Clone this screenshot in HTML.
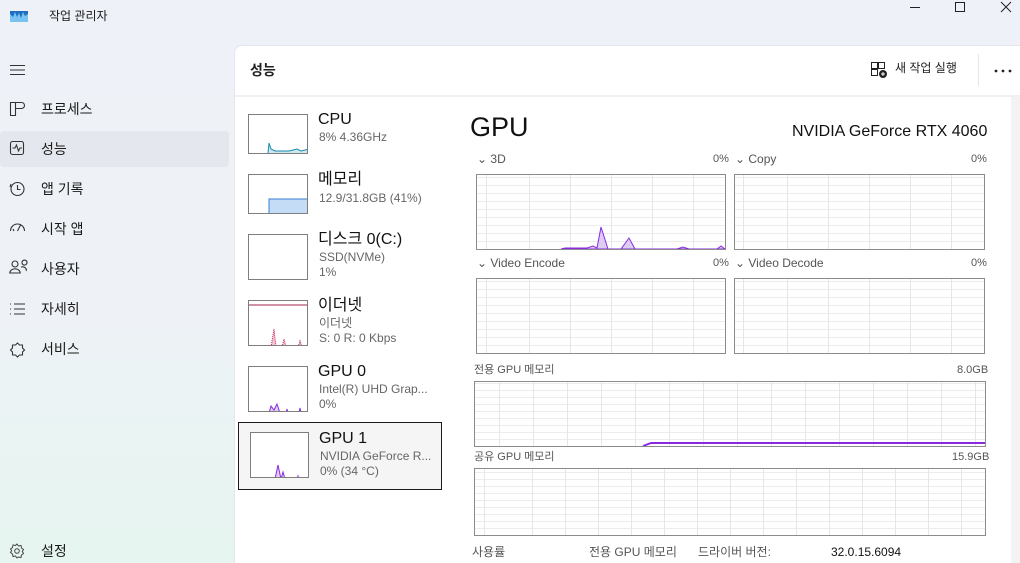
<!DOCTYPE html>
<html><head><meta charset="utf-8"><style>
*{margin:0;padding:0;box-sizing:border-box}
body{width:1020px;height:563px;overflow:hidden;position:relative;font-family:"Liberation Sans","Noto Sans CJK KR",sans-serif;background:linear-gradient(180deg,#eef1f7 0%,#eef2f6 55%,#e6f5f0 100%);color:#1a1a1a;line-height:1.15}
.a{position:absolute;white-space:nowrap}
.nav{font-size:14px;color:#1b1b1b}
.panel{position:absolute;left:234px;top:45px;width:786px;height:518px;background:#fff;border-top-left-radius:8px;border:1px solid #e3e6ea;border-right:none;border-bottom:none}
.g{position:absolute;border:1px solid #8b8b8b;background-color:#fff;
background-image:repeating-linear-gradient(90deg,transparent 0,transparent 40px,#e6e6e6 40px,#e6e6e6 41px),repeating-linear-gradient(0deg,transparent 0,transparent 7px,#ececec 7px,#ececec 8px);background-position:12px 0,0 0}
.lbl{font-size:12px;color:#555}
.th{position:absolute;border:1px solid #7e7e7e;background:#fff;overflow:hidden}
.t1{font-size:16px;color:#111;line-height:18px}
.t2{font-size:12px;color:#666;line-height:14px}
</style></head><body>
<svg class="a" style="left:10px;top:11px" width="18" height="11"><rect width="18" height="11" fill="#79c3f2"/><path d="M0 3 L3 6 L5 1 L7 6 L9 2 L11 7 L13 1 L15 5 L18 3 L18 0 L0 0Z" fill="#1f6fc0"/></svg>
<div class="a" style="left:49px;top:10px;font-size:12px">작업 관리자</div>
<svg class="a" style="left:905px;top:0" width="115" height="16" fill="none" stroke="#222" stroke-width="1"><path d="M5 7.5h10"/><rect x="50.5" y="2.5" width="9" height="9"/><path d="M96 2l10 10M106 2l-10 10"/></svg>
<svg class="a" style="left:10px;top:64px" width="15" height="12" stroke="#333" stroke-width="1"><path d="M0 1.5h15M0 6h15M0 10.5h15"/></svg>
<div class="a" style="left:0;top:131px;width:229px;height:36px;background:#e4e8ee;border-radius:4px"></div>
<svg class="a" style="left:9px;top:101px" width="20" height="270" fill="none" stroke="#333" stroke-width="1.1">
<path d="M1.5 1.5h11a3 3 0 0 1 0 6h-6v7h-5zM6.5 1.5v6"/>
<rect x="1.5" y="40.5" width="13" height="13" rx="2"/><path d="M3.5 47h2.5l1.5-3 2 6 1.5-3h2"/>
<circle cx="8.5" cy="88" r="6.5"/><path d="M8.5 84v4.5h3M2 83l-1 3"/>
<path d="M1.5 130a7 7 0 0 1 14 0M8.5 130l3-6M4 128l1 2"/>
<circle cx="6" cy="163" r="3"/><path d="M0.8 172a5 4 0 0 1 10.4 0zM13 161.5a2.5 2.5 0 1 1 0 .1M12 166a4 3 0 0 1 5 4"/>
<path d="M1 203h1M1 208h1M1 213h1M5 203h11M5 208h11M5 213h11"/>
<path d="M8.5 242l2 2h3v3l2 2-2 2v3h-3l-2 2-2-2h-3v-3l-2-2 2-2v-3h3z"/>
</svg>
<div class="a nav" style="left:41px;top:101px">프로세스</div>
<div class="a nav" style="left:41px;top:141px">성능</div>
<div class="a nav" style="left:41px;top:181px">앱 기록</div>
<div class="a nav" style="left:41px;top:221px">시작 앱</div>
<div class="a nav" style="left:41px;top:261px">사용자</div>
<div class="a nav" style="left:41px;top:301px">자세히</div>
<div class="a nav" style="left:41px;top:341px">서비스</div>
<svg class="a" style="left:9px;top:543px" width="16" height="16" fill="none" stroke="#444" stroke-width="1"><path d="M8 1l1.5 2 2.5-.5.5 2.5 2 1.5-1.2 2 1.2 2-2 1.5-.5 2.5-2.5-.5L8 15l-1.5-2-2.5.5-.5-2.5-2-1.5 1.2-2L1.5 6l2-1.5.5-2.5 2.5.5z"/><circle cx="8" cy="8" r="2.3"/></svg>
<div class="a nav" style="left:41px;top:543px">설정</div>
<div class="panel"></div>
<div class="a" style="left:235px;top:95px;width:785px;height:2px;background:#eef0f3"></div>
<div class="a" style="left:1011px;top:97px;width:9px;height:466px;background:#f3f3f3"></div>
<div class="a" style="left:250px;top:62px;font-size:14px;font-weight:bold;color:#222">성능</div>
<svg class="a" style="left:871px;top:62px" width="16" height="16" fill="none" stroke="#222" stroke-width="1"><rect x="0.5" y="0.5" width="6" height="6"/><rect x="0.5" y="7.5" width="6" height="6"/><rect x="7.5" y="0.5" width="6" height="6"/><circle cx="12" cy="12" r="3.5" fill="#222"/><path d="M12 10v4M10 12h4" stroke="#fff"/></svg>
<div class="a" style="left:895px;top:62px;font-size:12px;color:#222">새 작업 실행</div>
<div class="a" style="left:978px;top:54px;width:1px;height:32px;background:#e5e5e5"></div>
<svg class="a" style="left:994px;top:69px" width="18" height="4" fill="#222"><circle cx="2" cy="2" r="1.4"/><circle cx="9" cy="2" r="1.4"/><circle cx="16" cy="2" r="1.4"/></svg>
<div class="th" style="left:248px;top:114px;width:60px;height:40px"><svg width="60" height="40"><path d="M19 38L20 28L22 34L26 36L40 36L48 34L52 36L60 34L60 40L19 40Z" fill="#cfe7ef" stroke="#178bb0"/></svg></div>
<div class="a t1" style="left:318px;top:111px">CPU</div><div class="a t2" style="left:319px;top:130px">8% 4.36GHz</div>
<div class="th" style="left:248px;top:174px;width:60px;height:40px"><svg width="60" height="40"><path d="M20 40L20 24L60 24L60 40Z" fill="#c4dcf6" stroke="#3a7fd5"/></svg></div>
<div class="a t1" style="left:318px;top:171px">메모리</div><div class="a t2" style="left:319px;top:191px">12.9/31.8GB (41%)</div>
<div class="th" style="left:248px;top:234px;width:60px;height:46px"></div>
<div class="a t1" style="left:318px;top:231px">디스크 0(C:)</div><div class="a t2" style="left:319px;top:250px">SSD(NVMe)</div><div class="a t2" style="left:319px;top:265px">1%</div>
<div class="th" style="left:248px;top:300px;width:60px;height:46px"><svg width="60" height="46"><path d="M0 4H60" stroke="#a3204d"/><path d="M22 46L25 28L27 46M33 46L35 38L37 46M49 46L51 40L53 46" fill="#f2c3d2" stroke="#c1225b" stroke-dasharray="1 1"/></svg></div>
<div class="a t1" style="left:318px;top:297px">이더넷</div><div class="a t2" style="left:319px;top:316px">이더넷</div><div class="a t2" style="left:319px;top:331px">S: 0 R: 0 Kbps</div>
<div class="th" style="left:248px;top:366px;width:60px;height:46px"><svg width="60" height="46"><path d="M20 46L22 39L25 43L28 37L31 46M37 46L38 42L39 46M50 46L51 41L52 46" fill="#e0cdf6" stroke="#8a2be2"/></svg></div>
<div class="a t1" style="left:318px;top:363px">GPU 0</div><div class="a t2" style="left:319px;top:382px">Intel(R) UHD Grap...</div><div class="a t2" style="left:319px;top:397px">0%</div>
<div class="a" style="left:238px;top:422px;width:204px;height:68px;background:#f5f5f5;border:1px solid #1a1a1a"></div>
<div class="th" style="left:250px;top:432px;width:59px;height:46px"><svg width="60" height="46"><path d="M22 46L24 46L27 32L30 46L32 39L34 46M46 46L47 43L48 46" fill="#e0cdf6" stroke="#8a2be2"/></svg></div>
<div class="a t1" style="left:319px;top:430px">GPU 1</div><div class="a t2" style="left:320px;top:449px">NVIDIA GeForce R...</div><div class="a t2" style="left:320px;top:464px">0% (34 °C)</div>
<div class="a" style="left:470px;top:112px;font-size:27px;color:#111">GPU</div>
<div class="a" style="left:792px;top:123px;font-size:16px;color:#111">NVIDIA GeForce RTX 4060</div>
<div class="a lbl" style="left:477px;top:153px">⌄ 3D</div><div class="a lbl" style="left:713px;top:153px;font-size:11px">0%</div>
<div class="a lbl" style="left:735px;top:153px">⌄ Copy</div><div class="a lbl" style="left:971px;top:153px;font-size:11px">0%</div>
<div class="g" style="left:476px;top:174px;width:250px;height:76px"><svg class="a" style="left:0;top:0" width="248" height="74"><path d="M84 74L88 73L110 73L116 71L120 73L124 52L131 74L136 74L144 74L152 63L158 74L200 74L206 72L212 74L240 74L244 71L248 74Z" fill="#ddcdf5" stroke="#8a2be2"/></svg></div>
<div class="g" style="left:734px;top:174px;width:251px;height:76px"></div>
<div class="a lbl" style="left:477px;top:257px">⌄ Video Encode</div><div class="a lbl" style="left:713px;top:257px;font-size:11px">0%</div>
<div class="a lbl" style="left:735px;top:257px">⌄ Video Decode</div><div class="a lbl" style="left:971px;top:257px;font-size:11px">0%</div>
<div class="g" style="left:476px;top:278px;width:250px;height:76px"></div>
<div class="g" style="left:734px;top:278px;width:251px;height:76px"></div>
<div class="a" style="left:474px;top:364px;font-size:11px;color:#555">전용 GPU 메모리</div><div class="a" style="left:957px;top:364px;font-size:11px;color:#555">8.0GB</div>
<div class="g" style="left:474px;top:381px;width:512px;height:66px;background-position:25px 0,0 0;background-image:repeating-linear-gradient(90deg,transparent 0,transparent 33px,#e6e6e6 33px,#e6e6e6 34px),repeating-linear-gradient(0deg,transparent 0,transparent 6px,#ececec 6px,#ececec 7px)"><svg class="a" style="left:0;top:0" width="510" height="64"><path d="M168 64L176 61L510 61" fill="none" stroke="#8a2be2" stroke-width="2"/></svg></div>
<div class="a" style="left:474px;top:451px;font-size:11px;color:#555">공유 GPU 메모리</div><div class="a" style="left:952px;top:451px;font-size:11px;color:#555">15.9GB</div>
<div class="g" style="left:474px;top:468px;width:512px;height:68px;background-position:25px 0,0 0;background-image:repeating-linear-gradient(90deg,transparent 0,transparent 32px,#e6e6e6 32px,#e6e6e6 33px),repeating-linear-gradient(0deg,transparent 0,transparent 6px,#ececec 6px,#ececec 7px)"></div>
<div class="a" style="left:472px;top:546px;font-size:12px;color:#555">사용률</div>
<div class="a" style="left:589px;top:546px;font-size:12px;color:#555">전용 GPU 메모리</div>
<div class="a" style="left:698px;top:546px;font-size:12px;color:#555">드라이버 버전:</div>
<div class="a" style="left:831px;top:546px;font-size:12px;color:#111">32.0.15.6094</div>
</body></html>
